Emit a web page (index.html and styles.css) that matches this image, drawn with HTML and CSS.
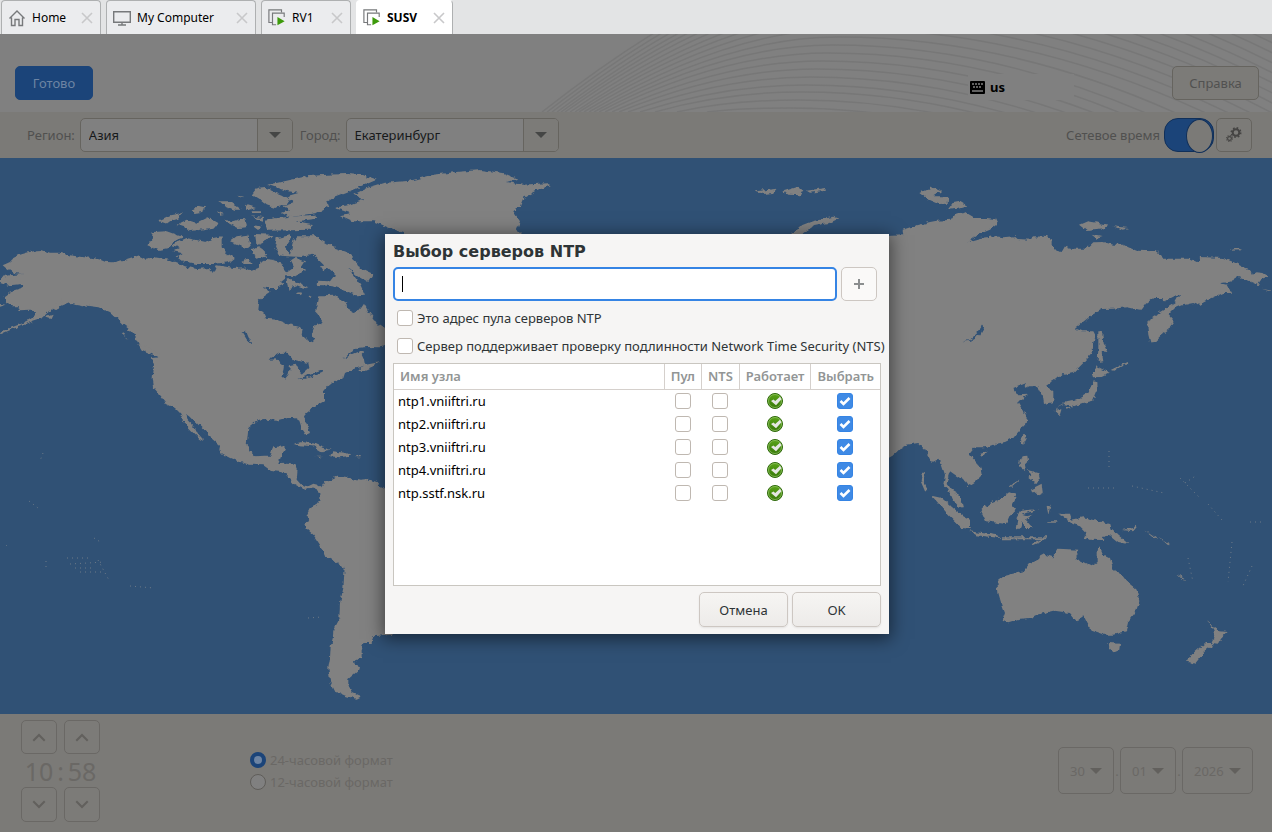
FILE: index.html
```html
<!DOCTYPE html>
<html lang="ru">
<head>
<meta charset="utf-8">
<title>SUSV</title>
<link rel="stylesheet" href="styles.css">
</head>
<body>
<svg class="defs" width="0" height="0" aria-hidden="true">
  <symbol id="close" viewBox="0 0 12 12"><path d="M1 1l10 10M11 1L1 11" fill="none" stroke="#c8c8ca" stroke-width="1.6"/></symbol>
  <symbol id="vm" viewBox="0 0 20 20">
    <path d="M5 15H1V1h14v3" fill="none" stroke="#77797b" stroke-width="1.3"/>
    <path d="M9 17.500H5V4.500h13V9" fill="none" stroke="#77797b" stroke-width="1.300"/>
    <path d="M10.500 9v9l8-4.500z" fill="#3d9a0b"/>
  </symbol>
  <symbol id="down" viewBox="0 0 12 6"><path d="M0 0h12L6 6z" fill="currentColor"/></symbol>
  <symbol id="chev-up" viewBox="0 0 14 10"><path d="M2 8l5-5 5 5" fill="none" stroke="currentColor" stroke-width="2" stroke-linecap="square"/></symbol>
  <symbol id="chev-down" viewBox="0 0 14 10"><path d="M2 2l5 5 5-5" fill="none" stroke="currentColor" stroke-width="2" stroke-linecap="square"/></symbol>
  <linearGradient id="okfill" x1="0" y1="0" x2="0" y2="1"><stop offset="0" stop-color="#5aa518"/><stop offset="1" stop-color="#37780a"/></linearGradient>
  <symbol id="ok" viewBox="0 0 16 16">
    <circle cx="8" cy="8" r="7.500" fill="url(#okfill)" stroke="#2f6a0c"/>
    <circle cx="8" cy="8" r="6.500" fill="none" stroke="#8fc062" stroke-width=".8"/>
    <path d="M4 8l2.500-1.500 1.700 1.500L13 3.800l1.500 2.500L9 12.300z" fill="#e4e6e2"/>
  </symbol>
</svg>

<nav class="tabs" aria-label="Вкладки">
  <div class="tab"><svg class="ico" viewBox="0 0 18 18"><path d="M1.500 9.500L9 2l7.500 7.500M3.500 8.500v8h3.500v-6h4v6h3.500v-8" fill="none" stroke="#77797b" stroke-width="1.400"/></svg><span>Home</span><button class="close" aria-label="Закрыть Home"><svg><use href="#close"/></svg></button></div>
  <div class="tab tab-wide"><svg class="ico" viewBox="0 0 18 18"><path d="M.7 2.700h16.600v10.500H.7zM9 13v3M5 16h8" fill="none" stroke="#77797b" stroke-width="1.400"/></svg><span>My Computer</span><button class="close" aria-label="Закрыть My Computer"><svg><use href="#close"/></svg></button></div>
  <div class="tab tab-rv"><svg class="ico"><use href="#vm"/></svg><span>RV1</span><button class="close" aria-label="Закрыть RV1"><svg><use href="#close"/></svg></button></div>
  <div class="tab tab-on"><svg class="ico"><use href="#vm"/></svg><span>SUSV</span><button class="close" aria-label="Закрыть SUSV"><svg><use href="#close"/></svg></button></div>
</nav>

<div class="screen">
  <header class="head">
    <svg class="waves" viewBox="0 0 1272 78" preserveAspectRatio="xMaxYMid slice" aria-hidden="true">
      <g fill="none" stroke="#777" stroke-width="1.500">
        <path d="M542 78Q750-85 890-85q225 0 450 130"/><path d="M547 78Q748-77 886-77q225 0 450 130"/>
        <path d="M552 78Q746-69 882-69q225 0 450 130"/><path d="M557 78Q744-61 878-61q225 0 450 130"/>
        <path d="M561 78Q742-53 874-53q225 0 450 130"/><path d="M565 78Q740-45 870-45q225 0 450 130"/>
        <path d="M570 78Q738-37 866-37q225 0 450 130"/><path d="M575 78Q736-29 862-29q225 0 450 130"/>
        <path d="M579 78Q734-21 856-21q225 0 450 130"/><path d="M584 78Q732-13 850-13q225 0 450 130"/>
        <path d="M589 78Q730-5 844-5q225 0 450 130"/><path d="M594 78Q728 3 838 3q225 0 450 135"/>
        <path d="M599 78Q726 11 832 11q225 0 450 140"/><path d="M605 78Q724 19 828 19q225 0 450 142"/>
        <path d="M612 78Q724 27 822 27q225 0 450 142"/><path d="M619 78Q724 35 816 35q225 0 450 142"/>
        <path d="M628 78Q724 43 810 43q225 0 450 142"/><path d="M640 78Q724 51 806 51q225 0 450 142"/>
        <path d="M655 78Q724 58 802 58q225 0 450 142"/><path d="M677 78Q730 66 798 66q225 0 450 142"/>
        <path d="M707 78Q740 74 790 74q225 0 450 142"/>
      </g>
    </svg>
    <button class="btn btn-done">Готово</button>
    <div class="kbd">
      <svg viewBox="0 0 15 13"><rect width="15" height="13" rx="1"/><path d="M2 3h2M5 3h2M8 3h2M11 3h2M3 6h2M6 6h2M9 6h2M2 10h11" stroke="#808080" stroke-width="1.500"/></svg>
      <span>us</span>
    </div>
    <button class="btn btn-help">Справка</button>
  </header>

  <div class="bar">
    <label for="region">Регион:</label>
    <div class="combo"><input id="region" value="Азия"><button aria-label="Список регионов"><svg><use href="#down"/></svg></button></div>
    <label for="city">Город:</label>
    <div class="combo"><input id="city" value="Екатеринбург"><button aria-label="Список городов"><svg><use href="#down"/></svg></button></div>
    <label class="net" for="nettime">Сетевое время</label>
    <input class="switch" id="nettime" type="checkbox" role="switch" checked>
    <button class="btn gear" aria-label="Настроить NTP"><svg viewBox="0 0 16 16"><g fill="none" stroke="#454443"><circle cx="10" cy="5.500" r="3.300" stroke-width="2"/><circle cx="10" cy="5.500" r="4.700" stroke-width="1.600" stroke-dasharray="1.700 2"/><circle cx="3.500" cy="11.500" r="1.900" stroke-width="1.100"/><circle cx="3.500" cy="11.500" r="2.900" stroke-width="1.200" stroke-dasharray="1.100 1.170"/></g></svg></button>
  </div>

  <main class="map">
    <svg viewBox="0 0 1272 556" preserveAspectRatio="xMidYMid slice" role="img" aria-label="Карта мира">
      <filter id="coast" x="0" y="0" width="1" height="1" color-interpolation-filters="sRGB"><feTurbulence type="fractalNoise" baseFrequency=".2" numOctaves="2" seed="4" result="n"/><feDisplacementMap in="SourceGraphic" in2="n" scale="5" xChannelSelector="R" yChannelSelector="G"/></filter>
      <g filter="url(#coast)">
      <rect x="-10" y="-10" width="1292" height="576" fill="#305175"/>
      <g transform="scale(.33333)" fill="#818181">
        <path d="M8 322L30 312 40 300 60 290 80 284 110 277 125 276 150 284 180 284 210 292 245 297 270 299 300 304 320 312 340 313 370 306 400 297 415 292 425 297 440 305 460 297 490 302 515 308 535 316 555 325 590 333 625 330 640 345 650 322 670 325 700 330 730 328 755 338 775 330 780 315 800 303 820 305 840 312 850 330 862 345 855 360 840 372 850 380 830 390 805 390 785 388 812 400 790 415 775 430 772 455 790 465 798 482 830 485 860 497 900 507 908 515 905 530 920 545 935 553 942 545 935 520 940 507 960 500 966 485 955 470 945 460 950 440 955 412 975 412 1000 410 1030 428 1040 435 1042 455 1060 465 1075 460 1085 448 1092 437 1105 460 1120 480 1130 495 1150 508 1175 515 1175 560 1140 568 1100 567 1070 570 1050 585 1030 603 1050 592 1080 580 1098 578 1085 590 1092 605 1095 620 1080 628 1060 633 1035 645 1030 660 1000 672 985 685 972 700 972 730 945 745 920 765 912 775 915 785 925 810 930 825 918 830 905 810 898 788 885 780 860 780 830 788 800 785 770 790 745 810 742 840 740 858 745 870 755 885 765 895 790 893 810 893 820 868 850 865 855 870 845 890 835 918 860 917 885 920 893 930 890 965 905 982 925 985 940 977 952 980 964 988 975 970 990 965 1015 953 1040 957 1055 963 1080 968 1110 965 1130 972 1140 985 1175 1000 1175 1430 1120 1435 1115 1455 1090 1455 1085 1475 1085 1500 1062 1510 1065 1522 1080 1528 1078 1535 1060 1550 1045 1563 1045 1580 1055 1602 1085 1615 1070 1622 1040 1615 1005 1600 990 1570 985 1530 990 1500 992 1465 998 1445 1000 1415 1018 1380 1020 1335 1030 1290 1034 1230 1010 1212 975 1195 960 1160 940 1130 920 1112 916 1100 925 1082 922 1070 932 1050 950 1040 958 1030 958 1005 950 992 937 988 920 996 900 986 880 975 865 958 848 940 810 936 790 922 750 920 720 912 690 900 665 887 658 880 660 860 640 843 620 825 610 815 590 795 570 775 560 768 562 785 580 805 590 825 605 842 612 850 598 843 580 825 560 805 550 785 540 765 525 750 500 738 480 712 462 690 458 660 462 620 456 600 476 598 455 585 420 560 410 540 395 520 370 500 350 480 330 462 295 448 250 442 210 435 180 447 165 450 145 463 125 480 100 488 70 502 30 515 0 528 0 522 30 510 75 493 105 475 108 460 90 458 60 460 55 445 30 445 18 430 14 415 35 400 68 390 65 378 30 382 0 372 0 358 30 352 70 348 40 345 20 332z"/>
        <path d="M442 262L455 245 458 222 500 220 550 238 520 250 505 270 475 276z"/>
        <path d="M515 260L560 240 590 247 615 252 640 240 665 235 665 265 680 285 705 300 690 312 640 318 590 318 550 310 530 295 545 285 520 280 540 270z"/>
        <path d="M475 188L510 172 545 165 535 182 510 190 500 197zM530 200L560 185 590 195 610 185 625 178 655 195 650 208 600 215 570 220 560 210zM575 155L600 142 615 145 610 162 580 165zM658 130L690 130 725 155 700 155 675 145zM650 160L672 168 660 170zM735 140L768 150 745 157zM668 185L700 190 735 180 742 208 715 210 690 198zM755 160H785V165H760zM752 175L790 180 785 188zM755 202L785 205 775 217zM715 113L732 116 725 120z"/>
        <path d="M755 110L770 90 795 87 815 98 845 110 870 125 860 140 825 150 800 142 780 125z"/>
        <path d="M805 80L860 68 920 55 980 50 1040 48 1090 52 1130 65 1085 85 1040 105 1000 120 980 132 985 145 950 165 915 170 870 178 845 165 870 155 850 145 880 135 860 115 895 105 860 98z"/>
        <path d="M795 185L830 180 945 170 950 182 890 190 935 198 930 215 870 217 805 218 800 200z"/>
        <path d="M690 250L710 235 745 230 752 265 735 272 720 262zM765 228L818 230 800 248 770 262zM755 275L775 265 790 275 802 295 775 303 758 290zM725 310L745 300 758 318 735 318z"/>
        <path d="M825 268L830 240 870 232 875 240 855 270 870 290 880 250 890 235 950 235 965 248 1000 268 1040 282 1070 310 1080 330 1120 348 1105 372 1075 355 1045 330 1080 378 1095 410 1070 412 1040 400 1000 385 950 380 952 368 990 370 1005 350 975 325 940 290 905 297 860 295 835 290zM870 310L885 300 915 310 905 325 915 340 885 355 850 350 880 330zM860 362L885 370 925 388 910 392 890 385 865 395zM960 325L975 322 983 332 970 340zM890 405L905 402 900 412zM928 412L938 416 930 420z"/>
        <path d="M1005 150L1050 140 1090 125 1060 110 1100 90 1150 75 1230 68 1300 50 1370 42 1440 36 1510 45 1552 62 1520 72 1570 80 1640 76 1652 82 1610 98 1570 120 1560 145 1540 160 1560 190 1550 215 1575 240H1260L1190 218 1160 208 1120 190 1060 190 1020 172 1050 165z"/>
        <path d="M2262 100L2300 96 2330 92 2320 104 2290 108zM2350 100L2390 88 2410 96 2400 112 2365 110zM2420 98L2475 90 2478 98 2430 104zM2360 240L2400 205 2440 190 2500 176 2515 182 2490 194 2440 204 2410 225 2400 240z"/>
        <path d="M415 558L445 568 475 588 478 600 455 588 425 575zM162 440L185 425 190 440 165 455zM135 478L158 470 152 483zM368 520L382 542 365 528zM1075 635L1090 622 1140 612 1120 625 1085 640zM0 438L20 440 0 446z"/>
        <path d="M880 858L905 852 940 856 965 868 992 875 965 880 940 865 900 862zM1000 880L1030 884 1052 893 1020 898 990 895zM946 896L968 896 960 900zM1066 894H1082V898H1066z"/>
      </g>
      <g transform="scale(.33333)" fill="#305175">
        <path d="M803 605L840 585 860 584 880 605 925 615 928 630 905 650 890 620 870 625 865 650 855 662 847 655 852 620 830 604zM895 662L930 650 970 636 968 644 920 662zM725 520L738 520 755 560 745 552zM1090 575L1120 573 1150 585 1150 608 1120 612 1095 600z"/>
      </g>
      <g transform="translate(880) scale(.33333)" fill="#818181">
        <path d="M0 235L70 232 68 215 100 205 150 192 170 188 215 185 225 170 250 162 280 180 320 180 345 183 352 198 330 215 290 232 265 250 300 240 345 235 370 238 400 235 410 243 455 245 462 235 500 237 515 245 515 262 530 278 545 282 555 265 570 272 620 272 640 253 670 252 700 260 730 260 745 268 770 278 830 280 847 292 850 302 930 302 955 314 960 297 1030 300 1060 312 1090 328 1110 335 1115 350 1130 343 1150 345 1165 355 1140 365 1135 382 1120 375 1085 360 1070 355 1060 370 1020 376 1040 380 1053 405 1030 405 990 423 955 442 940 435 905 442 885 450 865 470 882 490 865 515 845 530 825 550 812 557 805 530 802 500 810 485 840 462 885 435 900 408 880 415 850 430 848 420 820 420 800 435 785 455 760 452 740 448 700 452 665 453 640 467 605 495 585 512 605 520 640 520 648 535 640 550 638 585 610 615 580 645 555 650 545 648 525 665 500 685 520 700 520 732 492 738 488 710 478 695 475 685 445 685 435 690 440 675 400 690 415 712 445 710 415 730 430 755 440 780 435 800 415 821 400 840 375 852 350 857 330 865 310 868 285 868 268 888 285 908 300 925 305 945 295 965 265 984 255 970 225 950 210 940 205 955 200 975 215 995 240 1010 250 1050 235 1045 215 1020 205 995 190 980 195 950 185 920 175 905 155 915 148 900 135 875 115 855 80 860 60 872 40 892 0 915z"/>
        <path d="M118 105L155 88 183 100 160 115 205 115 203 137 175 138 145 125zM203 155L220 132 240 128 265 143 235 152zM600 200L625 190 685 200 680 210 620 216zM700 205L745 210 725 215zM635 230L668 237 650 242zM1045 278L1070 270 1085 277zM1145 392L1176 398V402z"/>
        <path d="M655 520L665 520 672 560 682 582 665 580 670 610 653 612 655 570zM650 625L690 645 665 657 635 658zM638 670L652 672 653 695 640 728 610 735 585 745 550 738 525 750 560 730 595 722 625 705 632 690zM555 750L580 745 560 755zM530 750L545 755 540 772 527 760zM692 636L740 612 742 616 700 638zM425 835L437 830 440 842 430 860 422 848zM300 885L320 878 322 885 305 897z"/>
        <path d="M425 895L442 893 445 915 435 925 438 940 420 925 418 910zM440 935L475 945 480 965 465 975 445 960 455 950zM455 995L485 980 488 1005 475 1012zM390 985L415 965 417 970 393 990z"/>
        <path d="M302 1055L312 1045 350 1030 385 1002 410 1010 395 1040 408 1055 390 1070 378 1098 318 1090zM155 1013L185 1020 220 1050 250 1075 270 1085 270 1112 245 1110 205 1070zM268 1120L355 1132 360 1140 290 1132zM365 1138H500V1144H365zM455 1155L495 1140 490 1148 460 1162zM420 1058L475 1053 450 1062 425 1070 440 1075 460 1070 435 1085 455 1110 440 1110 425 1090 420 1112 410 1112 415 1085 408 1080zM500 1045L512 1040 505 1070zM505 1090H535V1094H505zM125 945L135 942 130 970 145 1000 135 1000 122 970z"/>
        <path d="M535 1070L570 1070 575 1085 610 1078 690 1098 695 1115 725 1140 745 1158 715 1152 690 1132 675 1135 665 1146 630 1145 610 1138 620 1125 600 1105 575 1098 565 1085zM725 1116L760 1110 770 1100 772 1105 760 1120zM790 1112L830 1140 828 1144zM835 1136L870 1158 865 1162zM890 1248L918 1266 905 1262z"/>
        <path d="M352 1270L370 1255 430 1240 450 1215 495 1190 520 1198 535 1172 595 1175 585 1200 635 1225 650 1215 650 1180 658 1162 670 1190 690 1200 700 1235 725 1250 740 1270 770 1295 778 1330 768 1360 745 1390 738 1420 700 1430 670 1430 635 1418 620 1395 610 1375 590 1390 570 1365 520 1358 470 1370 450 1380 420 1382 385 1393 368 1385 375 1365 362 1330 355 1305zM682 1455L720 1457 718 1475 700 1483 688 1470z"/>
        <path d="M982 1386L1005 1410 1020 1420 1043 1422 1025 1440 1010 1460 995 1458 1003 1440 1000 1415zM975 1455L995 1455 995 1465 975 1480 945 1517 918 1510 940 1485z"/>
      </g>
      <g transform="translate(880) scale(.33333)" fill="#305175">
        <path d="M248 551L270 545 292 525 310 498 312 510 300 530 270 548z"/>
      </g>
      </g>
      <path fill="none" stroke="#6d7a88" stroke-width="1" stroke-dasharray="1 4" d="M67 400h22M70 406l35-2M75 410h20M98 402l12 22M80 414h25M29 343l9 7M43 295l-3 8M94 380l8 5M46 403v9M130 428l24 2M6 387l2 2M1180 320l20 20M1208 346l14 16M1185 325l12-8M1250 364h14M1088 330h28M1109 293v20M1132 328l32 7M1232 384l-4 40M1252 408l-10 22M1188 400l5 24M308 460l14-1"/>
    </svg>
  </main>

  <footer class="foot">
    <div class="clock">
      <button class="btn step" aria-label="Час вперёд"><svg><use href="#chev-up"/></svg></button><i></i><button class="btn step" aria-label="Минута вперёд"><svg><use href="#chev-up"/></svg></button>
      <span>10</span><span>:</span><span>58</span>
      <button class="btn step" aria-label="Час назад"><svg><use href="#chev-down"/></svg></button><i></i><button class="btn step" aria-label="Минута назад"><svg><use href="#chev-down"/></svg></button>
    </div>
    <div class="format">
      <label><input type="radio" name="fmt" checked>24-часовой формат</label>
      <label><input type="radio" name="fmt">12-часовой формат</label>
    </div>
    <div class="date">
      <div class="pick"><select aria-label="День"><option>30</option></select><svg><use href="#down"/></svg></div><span>.</span>
      <div class="pick"><select aria-label="Месяц"><option>01</option></select><svg><use href="#down"/></svg></div><span>.</span>
      <div class="pick pick-year"><select aria-label="Год"><option>2026</option></select><svg><use href="#down"/></svg></div>
    </div>
  </footer>

  <div class="overlay">
    <section class="dialog" role="dialog" aria-labelledby="title">
      <h1 id="title">Выбор серверов NTP</h1>
      <div class="add"><input type="text" aria-label="Адрес сервера" autofocus><span class="caret"></span><button aria-label="Добавить"><svg viewBox="0 0 10 10"><path d="M5 0v10M0 5h10" stroke="#8b8e8f" stroke-width="2"/></svg></button></div>
      <label class="opt"><input class="check" type="checkbox">Это адрес пула серверов NTP</label>
      <label class="opt"><input class="check" type="checkbox">Сервер поддерживает проверку подлинности Network Time Security (NTS)</label>
      <div class="list">
        <table>
          <thead><tr><th class="name">Имя узла</th><th>Пул</th><th>NTS</th><th>Работает</th><th>Выбрать</th></tr></thead>
          <tbody>
            <tr><td>ntp1.vniiftri.ru</td><td><input class="check" type="checkbox" aria-label="Пул"></td><td><input class="check" type="checkbox" aria-label="NTS"></td><td><svg><use href="#ok"/></svg></td><td><input class="check" type="checkbox" aria-label="Выбрать" checked></td></tr>
            <tr><td>ntp2.vniiftri.ru</td><td><input class="check" type="checkbox" aria-label="Пул"></td><td><input class="check" type="checkbox" aria-label="NTS"></td><td><svg><use href="#ok"/></svg></td><td><input class="check" type="checkbox" aria-label="Выбрать" checked></td></tr>
            <tr><td>ntp3.vniiftri.ru</td><td><input class="check" type="checkbox" aria-label="Пул"></td><td><input class="check" type="checkbox" aria-label="NTS"></td><td><svg><use href="#ok"/></svg></td><td><input class="check" type="checkbox" aria-label="Выбрать" checked></td></tr>
            <tr><td>ntp4.vniiftri.ru</td><td><input class="check" type="checkbox" aria-label="Пул"></td><td><input class="check" type="checkbox" aria-label="NTS"></td><td><svg><use href="#ok"/></svg></td><td><input class="check" type="checkbox" aria-label="Выбрать" checked></td></tr>
            <tr><td>ntp.sstf.nsk.ru</td><td><input class="check" type="checkbox" aria-label="Пул"></td><td><input class="check" type="checkbox" aria-label="NTS"></td><td><svg><use href="#ok"/></svg></td><td><input class="check" type="checkbox" aria-label="Выбрать" checked></td></tr>
          </tbody>
        </table>
      </div>
      <div class="actions"><button>Отмена</button><button>OK</button></div>
    </section>
  </div>
</div>
</body>
</html>
```
FILE: styles.css
```css
* { box-sizing: border-box; }
body {
  margin: 0;
  min-height: 100vh;
  display: flex;
  flex-direction: column;
  font: 13px/18px "Noto Sans", sans-serif;
  color: #2e3436;
  background: #7b7a77;
}
button, input, select { font: inherit; color: inherit; margin: 0; }
.defs { position: absolute; }

/* Tabs */
.tabs { display: flex; gap: 5px; height: 34px; padding-left: 1px; background: #e3e4e5; }
.tab {
  display: flex;
  align-items: center;
  width: 100px;
  padding: 0 7px 0 6px;
  border: 1px solid #aeb0b1;
  border-bottom: 0;
  border-radius: 4px 4px 0 0;
  background: #ebecee;
  color: #000;
  font-size: 12px;
}
.tab-wide { width: 150px; }
.tab-rv { width: 90px; }
.tab-on { width: 97px; background: #fff; border-color: #fff #aeb0b1 #fff #fff; font-weight: 700; }
.tab .ico { width: 18px; height: 18px; margin-right: 6px; flex: none; }
.tab .close { margin-left: auto; padding: 0; border: 0; background: none; line-height: 0; }
.close svg { width: 12px; height: 12px; }

/* Dimmed installer screen */
.screen { position: relative; flex: 1; display: flex; flex-direction: column; }
.btn { border: 1px solid #66645f; border-radius: 5px; background: #7c7b78; color: #515150; padding: 0; }
.head {
  position: relative;
  display: flex;
  align-items: flex-start;
  height: 78px;
  padding: 32px 13px 0 15px;
  background: #808080;
}
.waves { position: absolute; inset: 0; width: 100%; height: 100%; }
.head .btn { position: relative; height: 34px; }
.head .btn-done { width: 78px; background: #1b4479; border-color: #1b4479; color: #6d84a3; }
.btn-help { width: 87px; }
.kbd {
  position: relative;
  display: flex;
  align-items: center;
  gap: 5px;
  width: 106px;
  height: 26px;
  margin: 8px 98px 0 auto;
  padding-left: 2px;
  background: #808080;
  color: #000;
  font-weight: 700;
}
.kbd svg { width: 15px; height: 13px; }

.bar { display: flex; align-items: center; height: 46px; padding: 0 20px 0 27px; background: #7b7a77; color: #50504f; }
.bar label { margin-right: 5px; }
.combo { display: flex; width: 213px; height: 34px; margin-right: 7px; border: 1px solid #66645f; border-radius: 5px; background: #808080; overflow: hidden; }
.combo input { flex: 1; min-width: 0; padding: 0 8px; border: 0; background: none; color: #17191b; }
.combo button { width: 35px; padding: 0; border: 0; border-left: 1px solid #66645f; background: #7c7b78; color: #454645; line-height: 0; }
.combo svg, .pick svg { width: 12px; height: 6px; }
.bar .net { margin: 0 4px 0 auto; }
.switch {
  appearance: none;
  width: 50px;
  height: 34px;
  margin-right: 2px;
  border: 1px solid #11305a;
  border-radius: 14px;
  background: #1b4479;
  display: flex;
  justify-content: flex-end;
}
.switch::before { content: ""; width: 25px; height: 32px; border: 1px solid #11305a; border-radius: 50%; background: #7b7a77; }
.gear { width: 36px; height: 34px; line-height: 0; }
.gear svg { width: 16px; height: 16px; }

.map { flex: 1; min-height: 300px; display: grid; overflow: hidden; background: #305175; }
.map svg { width: 100%; height: 100%; min-height: 0; }

.foot { display: flex; height: 118px; padding: 6px 19px 0 21px; background: #7b7a77; color: #6a6865; }
.clock { display: grid; grid-template-columns: 36px 7px 36px; grid-template-rows: 34px 33px 35px; align-content: start; justify-items: center; align-items: center; width: 229px; }
.clock span { font-size: 25px; line-height: 32px; }
.step { width: 36px; height: 100%; color: #62605d; line-height: 0; border-color: #6a6865; }
.step svg { width: 14px; height: 10px; }
.format { padding-top: 31px; display: flex; flex-direction: column; gap: 4px; }
.format label { display: flex; align-items: center; gap: 4px; }
.format input { appearance: none; width: 16px; height: 16px; border: 1px solid #5f5d59; border-radius: 50%; background: #808080; }
.format input:checked { border: 4px solid #1b4479; background: #6d84a3; }
.date { display: flex; margin: 27px 0 0 auto; }
.date > span { width: 6px; padding-top: 15px; text-align: center; }
.pick { display: grid; align-items: center; width: 56px; height: 47px; border: 1px solid #6a6865; border-radius: 5px; color: #62605d; }
.pick select, .pick svg { grid-area: 1 / 1; }
.pick select { appearance: none; height: 100%; padding: 0 11px; border: 0; background: none; color: #6a6865; }
.pick svg { justify-self: end; margin-right: 11px; pointer-events: none; }
.pick-year { width: 71px; }

/* NTP dialog */
.overlay { position: absolute; inset: 0; display: grid; place-content: center; padding: 2px 0 0 2px; }
.dialog { width: 504px; padding: 9px 8px 7px; background: #f6f5f4; box-shadow: 0 3px 16px 2px rgba(0, 0, 0, .5); }
.dialog h1 { margin: 0 0 6px; font: 700 16px/18px "DejaVu Sans", sans-serif; }
.add { position: relative; display: flex; gap: 4px; margin-right: 4px; }
.add input { flex: 1; height: 34px; padding: 0 8px; border: 2px solid #3584e4; border-radius: 5px; background: #fff; outline: 0; caret-color: transparent; }
.caret { position: absolute; left: 9px; top: 9px; width: 1px; height: 16px; background: #000; }
.add button { width: 36px; border: 1px solid #cdc7c2; border-radius: 5px; background: #faf9f8; padding: 0; line-height: 0; }
.add svg { width: 10px; height: 10px; }
.opt { display: flex; align-items: center; gap: 4px; height: 28px; padding-left: 4px; white-space: nowrap; }
.add + .opt { margin-top: 3px; }
.check {
  appearance: none;
  flex: none;
  width: 16px;
  height: 16px;
  border: 1px solid #bfb8b1;
  border-radius: 3px;
  background: #fff;
}
.check:checked {
  border-color: #3584e4;
  background: #3f8ae5 url("data:image/svg+xml,%3Csvg xmlns='http://www.w3.org/2000/svg' viewBox='0 0 14 14'%3E%3Cpath d='M2.500 7l3 3 6-6' fill='none' stroke='white' stroke-width='2.600'/%3E%3C/svg%3E");
}
.list { height: 223px; margin-top: 3px; border: 1px solid #c9c6c0; background: #fff; overflow: hidden; }
table { width: 100%; border-collapse: collapse; }
th { height: 25px; padding: 0 6px; border: 1px solid #d5d0cc; border-width: 0 0 1px 1px; color: #929595; font-weight: 600; }
th.name { width: 100%; border-left: 0; text-align: left; }
td { height: 23px; padding: 0; color: #000; text-align: center; line-height: 0; }
td:first-child { padding-left: 4px; text-align: left; line-height: 18px; }
td svg { width: 16px; height: 16px; }
td .check, td svg { vertical-align: top; }
.actions { display: flex; justify-content: flex-end; gap: 4px; margin-top: 6px; }
.actions button { width: 89px; height: 35px; border: 1px solid #cdc7c2; border-radius: 5px; background: linear-gradient(#f6f5f3, #edebe9); box-shadow: 0 1px 2px rgba(0, 0, 0, .08); }
```
